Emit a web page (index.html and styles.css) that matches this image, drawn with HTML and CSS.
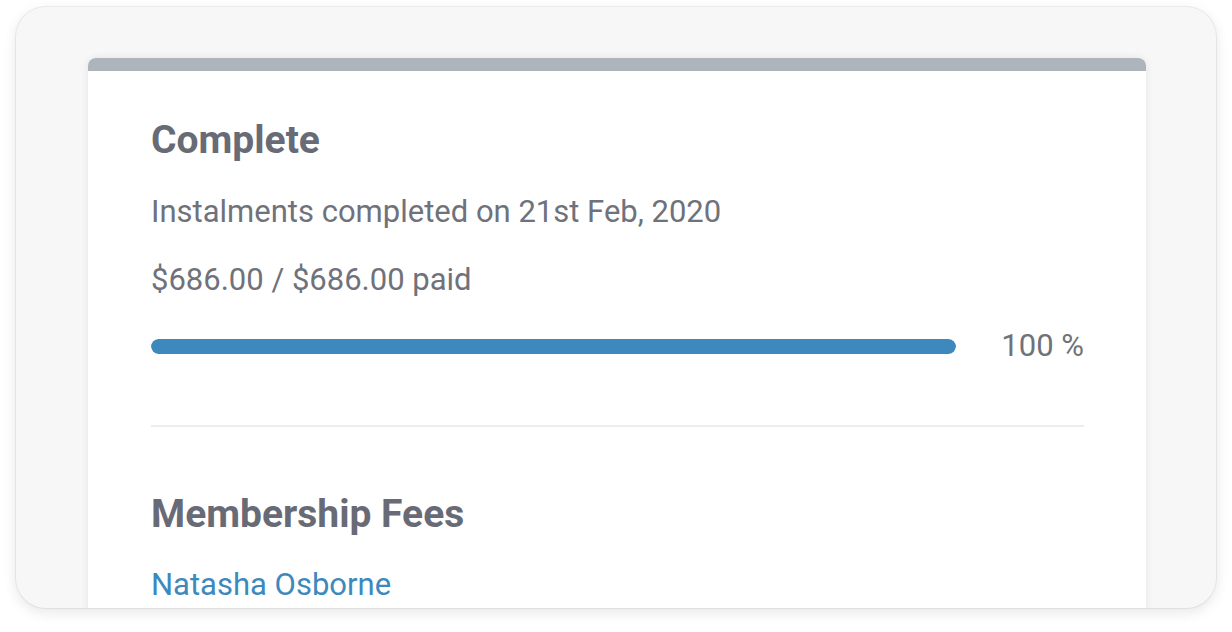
FILE: index.html
```html
<!DOCTYPE html>
<html lang="en">
<head>
<meta charset="utf-8">
<title>Instalments</title>
<link rel="stylesheet" href="styles.css">
</head>
<body>
<div class="frame">
  <div class="card">
    <div class="card-bar"></div>
    <div class="card-body">
      <h2 class="title">Complete</h2>
      <p class="text text-first">Instalments completed on 21st Feb, 2020</p>
      <p class="text">$686.00 / $686.00 paid</p>
      <div class="progress-row">
        <div class="progress"><div class="progress-fill" style="width:100%"></div></div>
        <span class="progress-label">100 %</span>
      </div>
      <hr class="divider">
      <h2 class="title title-second">Membership Fees</h2>
      <a class="link" href="#">Natasha Osborne</a>
    </div>
  </div>
</div>
</body>
</html>
```

FILE: styles.css
```css
* { box-sizing: border-box; }
html, body { margin: 0; padding: 0; background: #ffffff; }
body {
  width: 1232px;
  height: 632px;
  overflow: hidden;
  font-family: Roboto, "Liberation Sans", sans-serif;
  padding: 7px 16px 0 16px;
}
.frame {
  width: 1200px;
  height: 601px;
  background: #f7f7f8;
  border-radius: 30px;
  box-shadow: 0 0 0 1px rgba(0,0,0,0.06), 0 4px 14px rgba(0,0,0,0.10);
  overflow: hidden;
  padding: 51px 70px 0 72px;
}
.card {
  background: #ffffff;
  border-radius: 8px 8px 0 0;
  box-shadow: 0 0 8px rgba(0,0,0,0.08);
  height: 700px;
  overflow: hidden;
}
.card-bar {
  height: 13px;
  background: #adb4bc;
}
.card-body {
  padding: 46px 62px 0 63px;
}
.title {
  margin: 0;
  font-size: 39px;
  line-height: 46px;
  font-weight: 700;
  color: #686b75;
}
.text {
  margin: 32px 0 0 0;
  font-size: 31px;
  line-height: 36px;
  color: #6f727b;
}
.text-first { margin-top: 31px; }
.progress-row {
  display: flex;
  align-items: center;
  margin-top: 32px;
  height: 32px;
}
.progress {
  width: 805px;
  height: 15px;
  border-radius: 8px;
  background: #e6e8eb;
  overflow: hidden;
}
.progress-fill {
  height: 100%;
  background: #3d89bd;
  border-radius: 8px;
}
.progress-label {
  margin-left: auto;
  font-size: 31px;
  line-height: 32px;
  color: #6f727b;
}
.divider {
  margin: 63px 0 0 0;
  border: 0;
  height: 2px;
  background: #ececf0;
}
.title-second { margin-top: 64px; }
.link {
  display: block;
  margin-top: 30px;
  font-size: 31px;
  line-height: 36px;
  color: #3d89bd;
  text-decoration: none;
}
```
